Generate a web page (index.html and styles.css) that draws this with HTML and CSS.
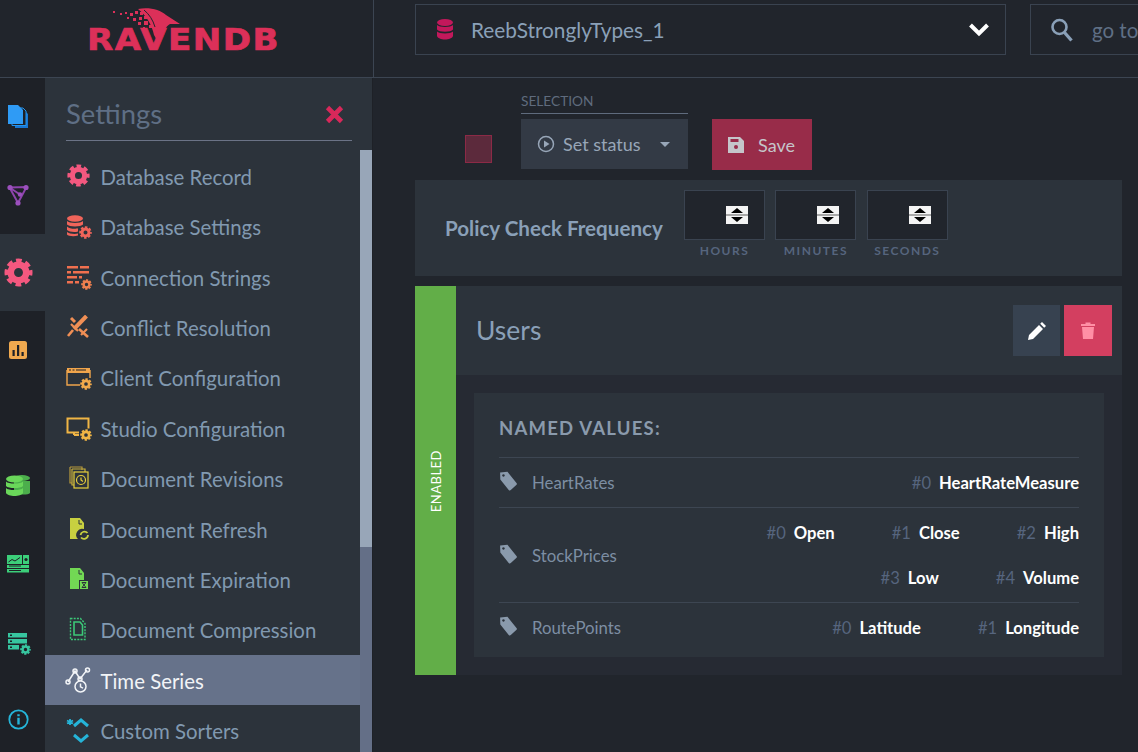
FILE: index.html
```html
<!DOCTYPE html>
<html lang="en">
<head>
<meta charset="utf-8">
<title>Time Series</title>
<link rel="stylesheet" href="styles.css">
</head>
<body>
<svg class="defs" aria-hidden="true">
  <symbol id="gear" viewBox="0 0 24 24">
    <circle cx="12" cy="12" r="6.400" fill="none" stroke="currentColor" stroke-width="5.400"/>
    <circle cx="12" cy="12" r="9.700" fill="none" stroke="currentColor" stroke-width="3.800" stroke-dasharray="4.600 3.020" stroke-dashoffset="2.300"/>
  </symbol>
  <symbol id="tag" viewBox="0 0 18 20">
    <path d="M1 1.500 8 .8l8.600 10.600a1.400 1.400 0 0 1-.2 2l-5.200 4.800a1.400 1.400 0 0 1-2-.2L1.200 8.200ZM4.200 3a1.200 1.200 0 1 0 .01 0Z" fill="currentColor" fill-rule="evenodd"/>
  </symbol>
</svg>

<header class="topbar">
  <div class="brand">
    <div class="logo">
      <span class="logo-text">RAVENDB</span>
      <svg class="logo-bird" viewBox="0 0 80 40" width="80" height="40">
        <path d="M30 4C42 2 52 5 58 10L72 19 62 19C58 21 55 27 50 37L46 30C44 20 38 10 30 4Z" fill="#dc3059"/>
        <path d="M36 5C41 9 45 15 47 22" stroke="#21252c" stroke-width="1" fill="none"/>
        <g fill="#dc3059">
          <rect x="5" y="6" width="2" height="2"/><rect x="12" y="8" width="2" height="2"/><rect x="17" y="7" width="2" height="2"/>
          <rect x="22" y="8" width="3" height="3"/><rect x="27" y="6" width="3" height="3"/><rect x="32" y="7" width="3" height="3"/>
          <rect x="19" y="12" width="2" height="2"/><rect x="25" y="13" width="3" height="3"/><rect x="31" y="12" width="3" height="3"/>
          <rect x="36" y="11" width="3" height="3"/><rect x="30" y="17" width="3" height="3"/><rect x="36" y="16" width="4" height="4"/>
          <rect x="41" y="20" width="3" height="3"/><rect x="35" y="22" width="2" height="2"/>
        </g>
      </svg>
    </div>
  </div>
  <div class="topbar-main">
    <div class="db-select">
      <svg class="db-icon" width="18" height="24" viewBox="0 0 18 24"><g fill="#c2185b"><ellipse cx="9" cy="4.500" rx="8" ry="3.500"/><path d="M1 7c2 2.600 14 2.600 16 0v4.500c-2 3-14 3-16 0Z"/><path d="M1 13.500c2 2.600 14 2.600 16 0V18c-1 4.600-15 4.600-16 0Z"/></g></svg>
      <span class="db-name">ReebStronglyTypes_1</span>
      <svg class="chevron" width="22" height="15" viewBox="0 0 22 15"><path d="M2.500 3 11 11.500 19.500 3" fill="none" stroke="#fff" stroke-width="4"/></svg>
    </div>
    <div class="search">
      <svg width="24" height="26" viewBox="0 0 24 26"><circle cx="9.500" cy="10" r="7" fill="none" stroke="#8aa0b8" stroke-width="2.600"/><path d="m14.500 15.500 7 8" stroke="#8aa0b8" stroke-width="3.400"/></svg>
      <span class="search-text">go to</span>
    </div>
  </div>
</header>

<div class="workspace">
  <nav class="rail">
    <div class="rail-item">
      <svg width="22" height="26" viewBox="0 0 22 26"><path d="M8 7h10l3 3v14H8Z" fill="#1976d2"/><path d="M5 4h11l3 3v14.500H5Z" fill="#1e2127" stroke="#2196f3" stroke-width="1"/><path d="M1 1h10l5 5v14H1Z" fill="#2f9bf5"/></svg>
    </div>
    <div class="rail-item">
      <svg width="22" height="22" viewBox="0 0 22 22"><g stroke="#8e44ad" stroke-width="2" fill="none"><path d="M2.500 3.500 19.500 3 11 19ZM2.500 3.500 13 10.500"/></g><g fill="#9b50bd"><circle cx="3" cy="3.500" r="2.600"/><circle cx="19" cy="3.500" r="2.600"/><circle cx="11" cy="19" r="2.600"/><circle cx="13" cy="10.500" r="2.200"/></g></svg>
    </div>
    <div class="rail-item rail-active">
      <svg class="c-pink" width="29" height="29"><use href="#gear"/></svg>
    </div>
    <div class="rail-item rail-gap">
      <svg width="18" height="18" viewBox="0 0 18 18"><rect width="18" height="18" rx="2.500" fill="#f0a94f"/><path d="M3.500 9h2.200v6H3.500ZM8 4h2.200v11H8ZM12.500 11h2.200v4h-2.200Z" fill="#1e2127"/></svg>
    </div>
    <div class="rail-item">
      <svg width="26" height="24" viewBox="0 0 26 24"><g fill="#4cae4c"><ellipse cx="17" cy="4" rx="8" ry="3"/><path d="M9 7h16v12c-2 2-10 2-16 0Z"/></g><g fill="#6ad75a"><ellipse cx="9.500" cy="5" rx="8.500" ry="3.500"/><path d="M1 7.500c2 2.800 15 2.800 17 0V12c-2 2.800-15 2.800-17 0Z"/><path d="M1 14c2 2.800 15 2.800 17 0v5c-2 4-15 4-17 0Z"/></g></svg>
    </div>
    <div class="rail-item">
      <svg width="22" height="18" viewBox="0 0 22 18"><path d="M0 0h15v9H0ZM16 0h6v9h-6ZM0 10h22v3H0ZM0 14h22v3.500H0Z" fill="#3ccf7a"/><path d="M1.500 7 5 4.500l3 1.500 5-3.500" stroke="#1e2127" stroke-width="1" fill="none"/><circle cx="19" cy="4.500" r="1.600" fill="#1e2127"/><path d="M2 11h12M2 15.500h12" stroke="#1e2127" stroke-width="1"/></svg>
    </div>
    <div class="rail-item rail-server">
      <svg width="20" height="20" viewBox="0 0 20 20"><path d="M0 0h19v4.500H0ZM0 6h19v4.500H0ZM0 12h11v4.500H0Z" fill="#37c6a0"/><g fill="#1e2127"><rect x="2" y="1.500" width="2" height="1.500"/><rect x="2" y="7.500" width="2" height="1.500"/><rect x="2" y="13.500" width="2" height="1.500"/></g></svg>
      <svg class="rail-sub c-teal" width="11" height="11"><use href="#gear"/></svg>
    </div>
    <div class="rail-item">
      <svg width="21" height="21" viewBox="0 0 21 21"><circle cx="10.500" cy="10.500" r="9.200" fill="none" stroke="#25b4d8" stroke-width="1.800"/><path d="M9.300 8.800h2.400v6.700H9.300ZM9.300 5.200h2.400v2.100H9.300Z" fill="#25b4d8"/></svg>
    </div>
  </nav>

  <aside class="panel">
    <div class="panel-head">
      <h2 class="panel-title">Settings</h2>
      <svg class="panel-close" width="19" height="19" viewBox="0 0 19 19"><path d="m2.500 2.500 14 14M16.500 2.500l-14 14" stroke="#d8285a" stroke-width="4.600"/></svg>
    </div>
    <div class="panel-body">
      <ul class="menu">
        <li class="menu-item"><span class="menu-icon"><svg class="c-pink" width="23" height="23"><use href="#gear"/></svg></span>Database Record</li>
        <li class="menu-item"><span class="menu-icon"><svg width="24" height="22" viewBox="0 0 24 22"><g fill="#f0645a"><ellipse cx="9" cy="3.500" rx="8" ry="3.200"/><path d="M1 6c2 2.600 14 2.600 16 0v3.600c-2 2.600-14 2.600-16 0ZM1 11.500c2 2.600 9 2.600 11 1.800v3.200c-3 1-9 .6-11-1.400ZM1 17c2 2 8 2.200 11 1.600v2c-4 1.400-10 .6-11-1Z"/></g></svg><svg class="icon-sub c-coral" width="13" height="13"><use href="#gear"/></svg></span>Database Settings</li>
        <li class="menu-item"><span class="menu-icon"><svg width="24" height="21" viewBox="0 0 24 21"><path d="M1 0h11v2.500H1ZM14 0h9v2.500h-9ZM1 5h4v2.500H1ZM7 5h16v2.500H7ZM1 10h10v2.500H1ZM13 10h3v2.500h-3ZM1 15h6v2.500H1ZM9 15h4v2.500H9Z" fill="#f0704f"/></svg><svg class="icon-sub c-orange1" width="11" height="11"><use href="#gear"/></svg></span>Connection Strings</li>
        <li class="menu-item"><span class="menu-icon"><svg width="25" height="23" viewBox="0 0 25 23"><g stroke="#f08f55" fill="none"><path d="M20.500 1 8 14" stroke-width="4"/><path d="M5 9l7 7" stroke-width="2.200"/><path d="M7 15l-5 6" stroke-width="2.600"/><path d="M5 3l4 4" stroke-width="3"/><path d="m13 14 9 8" stroke-width="2.600"/><path d="m15 20 6-6" stroke-width="2.200"/></g></svg></span>Conflict Resolution</li>
        <li class="menu-item"><span class="menu-icon"><svg width="25" height="20" viewBox="0 0 25 20"><path d="M1 1h23v5H1Z" fill="#f0a54c"/><path d="M1 3v15h13M24 3v8" fill="none" stroke="#f0a54c" stroke-width="1.400"/><path d="M3 3h2M6.500 3h2M10 3h10" stroke="#1e2127" stroke-width="1"/></svg><svg class="icon-sub c-orange2" width="12" height="12"><use href="#gear"/></svg></span>Client Configuration</li>
        <li class="menu-item"><span class="menu-icon"><svg width="25" height="22" viewBox="0 0 25 22"><path d="M13 15.500H1.500v-14h21v10" fill="none" stroke="#f0b545" stroke-width="2"/><path d="M8 15v3M8 18h5" stroke="#f0b545" stroke-width="2"/></svg><svg class="icon-sub c-amber" width="12" height="12"><use href="#gear"/></svg></span>Studio Configuration</li>
        <li class="menu-item"><span class="menu-icon"><svg width="24" height="24" viewBox="0 0 24 24"><g fill="none" stroke-width="1.200"><path d="M4 1h12v3M4 1v16h2" stroke="#b89a3c"/><path d="M6 3h13v3M6 3v16h2" stroke="#c8b03c"/><rect x="8" y="6" width="14" height="16" stroke="#e8d03c"/><circle cx="15" cy="14" r="4.500" stroke="#e8d03c"/><path d="M15 11.500V14l2 1.500" stroke="#e8d03c"/></g></svg></span>Document Revisions</li>
        <li class="menu-item"><span class="menu-icon"><svg width="24" height="24" viewBox="0 0 24 24"><path d="M4 1h10l4 5v6a6 6 0 0 0-6 10H4Z" fill="#c8d040"/><path d="M13 3v4h3" stroke="#2c333b" fill="none"/><path d="M14.500 18a4 4 0 0 1 7-2M22 18a4 4 0 0 1-7 2.500" fill="none" stroke="#c8d040" stroke-width="1.800"/></svg></span>Document Refresh</li>
        <li class="menu-item"><span class="menu-icon"><svg width="24" height="24" viewBox="0 0 24 24"><path d="M4 1h10l4 5v7h-5v9H4Z" fill="#72d854"/><path d="M13 3v4h3" stroke="#2c333b" fill="none"/><path d="M14 14h8v8h-8Z" fill="#72d854"/><path d="M16 15.500h4L16 20.500h4Z" fill="none" stroke="#2c333b"/></svg></span>Document Expiration</li>
        <li class="menu-item"><span class="menu-icon"><svg width="24" height="24" viewBox="0 0 24 24"><path d="M4.500 1.500h10l4.500 5v16h-14.500Z" fill="none" stroke="#3cc878" stroke-width="1.400" stroke-dasharray="2 1.200"/><path d="M8 5h6l2.500 3v10H8Z" fill="none" stroke="#3cc878" stroke-width="1.600"/></svg></span>Document Compression</li>
        <li class="menu-item menu-item-active"><span class="menu-icon"><svg width="26" height="26" viewBox="0 0 26 26"><g fill="none" stroke="#f2f4f7" stroke-width="1.500"><path d="m3 15 7-11 5 8 7-9"/><circle cx="3" cy="15" r="2"/><circle cx="10" cy="4" r="2"/><circle cx="22.500" cy="3" r="2"/><circle cx="15" cy="12" r="2"/><circle cx="15.500" cy="19.500" r="5.500" fill="#66728a"/><path d="M15.500 16.500v3.300l2.500 1.300"/></g></svg></span>Time Series</li>
        <li class="menu-item"><span class="menu-icon"><svg width="24" height="26" viewBox="0 0 24 26"><path d="m8 9 7-6 7 6M8 18l7 6 7-6" fill="none" stroke="#25b4d8" stroke-width="3"/><path d="M4 2v6M1 3.500l6 3M7 3.500l-6 3" stroke="#25b4d8" stroke-width="1.800"/></svg></span>Custom Sorters</li>
      </ul>
      <div class="scrollbar"><div class="scroll-thumb"></div></div>
    </div>
  </aside>

  <main class="content">
    <div class="toolbar">
      <div class="checkbox"></div>
      <div class="selection">
        <div class="selection-label">SELECTION</div>
        <div class="btn btn-status">
          <svg width="18" height="18" viewBox="0 0 18 18"><circle cx="9" cy="9" r="7.500" fill="none" stroke="#98a6b8" stroke-width="1.500"/><path d="m7 5.500 5.500 3.500L7 12.500Z" fill="#98a6b8"/></svg>
          <span>Set status</span>
          <span class="caret"></span>
        </div>
      </div>
      <div class="btn btn-save">
        <svg width="16" height="16" viewBox="0 0 16 16"><path d="M0 0h12l4 4v12H0Z" fill="#c5c5ca"/><rect x="2.500" y="2" width="8" height="3" fill="#982c49"/><circle cx="8" cy="10" r="2" fill="#982c49"/></svg>
        <span>Save</span>
      </div>
    </div>

    <section class="frequency">
      <h3 class="freq-title">Policy Check Frequency</h3>
      <div class="time-field">
        <div class="time-input"><span class="spinner"><span class="spin-up"></span><span class="spin-down"></span></span></div>
        <div class="time-label">HOURS</div>
      </div>
      <div class="time-field">
        <div class="time-input"><span class="spinner"><span class="spin-up"></span><span class="spin-down"></span></span></div>
        <div class="time-label">MINUTES</div>
      </div>
      <div class="time-field">
        <div class="time-input"><span class="spinner"><span class="spin-up"></span><span class="spin-down"></span></span></div>
        <div class="time-label">SECONDS</div>
      </div>
    </section>

    <section class="card">
      <div class="card-state"><span class="state-text">ENABLED</span></div>
      <div class="card-main">
        <div class="card-head">
          <h3 class="card-title">Users</h3>
          <div class="card-actions">
            <div class="icon-btn icon-btn-edit"><svg width="18" height="18" viewBox="0 0 18 18"><path d="M0 18l1-5L11 3l4 4L5 17ZM12.200 1.800 14 0l4 4-1.800 1.800Z" fill="#fff"/></svg></div>
            <div class="icon-btn icon-btn-delete"><svg width="14" height="17" viewBox="0 0 14 17"><path d="M0 2h4.500V.5h5V2H14v2H0ZM1 5h12l-1 12H2Z" fill="#ff8fa5"/></svg></div>
          </div>
        </div>
        <div class="card-body">
          <div class="values">
            <h4 class="values-title">NAMED VALUES:</h4>
            <div class="value-row">
              <div class="value-name"><svg class="tag" width="19" height="21"><use href="#tag"/></svg>HeartRates</div>
              <div class="value-list">
                <span class="value"><span class="idx">#0</span><b>HeartRateMeasure</b></span>
              </div>
            </div>
            <div class="value-row">
              <div class="value-name"><svg class="tag" width="19" height="21"><use href="#tag"/></svg>StockPrices</div>
              <div class="value-list">
                <span class="value"><span class="idx">#0</span><b>Open</b></span>
                <span class="value"><span class="idx">#1</span><b>Close</b></span>
                <span class="value"><span class="idx">#2</span><b>High</b></span>
                <span class="value"><span class="idx">#3</span><b>Low</b></span>
                <span class="value"><span class="idx">#4</span><b>Volume</b></span>
              </div>
            </div>
            <div class="value-row">
              <div class="value-name"><svg class="tag" width="19" height="21"><use href="#tag"/></svg>RoutePoints</div>
              <div class="value-list">
                <span class="value"><span class="idx">#0</span><b>Latitude</b></span>
                <span class="value"><span class="idx">#1</span><b>Longitude</b></span>
              </div>
            </div>
          </div>
        </div>
      </div>
    </section>
  </main>
</div>
</body>
</html>
```
FILE: styles.css
```css
* { box-sizing: border-box; }
html, body { margin: 0; height: 100%; }
body {
  width: 1138px;
  height: 752px;
  overflow: hidden;
  background: #21252c;
  color: #8199b0;
  font-family: Lato, "Open Sans", sans-serif;
  display: flex;
  flex-direction: column;
}
h2, h3, h4, ul { margin: 0; padding: 0; font-weight: normal; }
ul { list-style: none; }
svg { display: block; flex: none; }
.defs { position: absolute; width: 0; height: 0; }

.c-pink { color: #f4587f; }
.c-coral { color: #f0645a; }
.c-orange1 { color: #f0804f; }
.c-orange2 { color: #f0a94c; }
.c-amber { color: #f0b545; }
.c-teal { color: #37c6a0; }

/* top bar */
.topbar {
  height: 78px;
  flex: none;
  display: flex;
  border-bottom: 1px solid #3c4552;
}
.brand {
  width: 374px;
  flex: none;
  padding: 20px 0 0 87px;
  border-right: 1px solid #3c4552;
}
.logo { position: relative; width: 190px; }
.logo-text {
  display: block;
  font-family: "DejaVu Sans", sans-serif;
  font-weight: 700;
  font-size: 31px;
  line-height: 38px;
  letter-spacing: 1.300px;
  color: #dc3059;
  white-space: nowrap;
  -webkit-text-stroke: .7px #dc3059;
  transform: scaleX(1.1);
  transform-origin: left center;
}
.logo-bird { position: absolute; left: 21px; top: -15px; }
.topbar-main {
  flex: 1;
  display: flex;
  gap: 24px;
  padding: 4px 0 0 41px;
  min-width: 0;
}
.db-select {
  width: 591px;
  height: 51px;
  flex: none;
  display: flex;
  align-items: center;
  padding: 0 0 0 20px;
  border: 1px solid #3a4350;
}
.db-name { margin-left: 17px; font-size: 20.800px; color: #8aa0b8; }
.chevron { margin-left: auto; margin-right: 15px; }
.search {
  flex: 1;
  height: 51px;
  display: flex;
  align-items: center;
  gap: 18px;
  padding-left: 19px;
  border: 1px solid #3a4350;
  border-right: 0;
  overflow: hidden;
  white-space: nowrap;
}
.search-text { font-size: 20.500px; color: #5f6f85; }

/* layout */
.workspace { flex: 1; display: flex; min-height: 0; }
.rail { width: 45px; flex: none; display: flex; flex-direction: column; }
.rail-item {
  height: 77.800px;
  flex: none;
  display: flex;
  align-items: center;
  justify-content: center;
  padding-right: 9px;
  background: #1e2127;
  position: relative;
}
.rail-active { background: #2c333b; }
.rail-gap { height: 135.800px; padding-bottom: 58px; }
.rail-server { padding-top: 3px; }
.rail-sub { position: absolute; left: 20px; top: 41px; }

.panel {
  width: 328px;
  flex: none;
  display: flex;
  flex-direction: column;
  background: #2c333b;
  border-right: 1px solid #1e2127;
  min-height: 0;
}
.panel-head {
  flex: none;
  margin: 0 20px 0 21px;
  height: 63px;
  display: flex;
  align-items: center;
  justify-content: space-between;
  border-bottom: 1px solid #6b7386;
  padding: 9px 8px 0 0;
}
.panel-title { font-size: 27.400px; color: #5f6f85; }
.panel-close { margin-top: 2px; }
.panel-body { flex: 1; display: flex; min-height: 0; padding-top: 9px; }
.menu { flex: 1; overflow: hidden; padding-top: .6px; }
.menu-item {
  height: 50.400px;
  display: flex;
  align-items: center;
  padding: 2px 0 0 21px;
  font-size: 20.400px;
  white-space: nowrap;
}
.menu-item-active { background: #66728a; color: #f2f4f7; }
.menu-icon {
  width: 24px;
  height: 26px;
  margin: -2px 10.500px 0 0;
  flex: none;
  display: flex;
  align-items: center;
  justify-content: center;
  position: relative;
}
.icon-sub { position: absolute; right: -2px; bottom: 0; }
.scrollbar { width: 12px; flex: none; background: #646f87; }
.scroll-thumb { height: 397px; background: #98a6b8; }

/* content */
.content { flex: 1; min-width: 0; padding: 0 16px 0 42px; }
.toolbar {
  height: 102px;
  display: flex;
  align-items: flex-start;
}
.checkbox {
  width: 27px;
  height: 28px;
  margin: 57px 0 0 50px;
  background: #5c2a3c;
  border: 1px solid #8b2a46;
}
.selection { width: 167px; margin-left: 29px; padding-top: 15px; }
.selection-label {
  height: 21px;
  font-size: 13.700px;
  line-height: 16px;
  color: #5f6b7d;
  border-bottom: 1px solid #5f6b7d;
  margin-bottom: 5px;
}
.btn {
  height: 50px;
  display: flex;
  align-items: center;
  font-size: 18px;
}
.btn-status {
  padding-left: 16px;
  gap: 8px;
  background: #333a45;
  color: #98a6b8;
}
.caret {
  margin-left: 11px;
  border: 5px solid transparent;
  border-top-color: #98a6b8;
  border-bottom: 0;
}
.btn-save {
  width: 100px;
  height: 51px;
  margin: 41px 0 0 24px;
  padding-left: 16px;
  gap: 14px;
  background: #982c49;
  color: #c5c5ca;
}

.frequency {
  height: 96px;
  display: flex;
  padding: 10px 0 0 30px;
  background: #2c333b;
}
.freq-title {
  width: 239px;
  font-size: 20.600px;
  font-weight: 700;
  line-height: 24px;
  padding-top: 26px;
  color: #8aa0b8;
  white-space: nowrap;
}
.time-field { width: 81px; margin-right: 10.400px; }
.time-input {
  height: 50px;
  display: flex;
  align-items: center;
  justify-content: flex-end;
  padding-right: 16px;
  background: #21252c;
  border: 1px solid #3a4350;
}
.spinner {
  width: 22px;
  height: 18px;
  display: flex;
  flex-direction: column;
  justify-content: space-between;
  align-items: center;
  padding: 2px 0;
  background: linear-gradient(#f4f4f4 44%, #a8a8a8 44%, #a8a8a8 56%, #f4f4f4 56%);
}
.spin-up, .spin-down {
  width: 0;
  height: 0;
  border-left: 6px solid transparent;
  border-right: 6px solid transparent;
}
.spin-up { border-bottom: 5px solid #000; }
.spin-down { border-top: 5px solid #000; }
.time-label {
  margin-top: 3px;
  font-size: 12px;
  font-weight: 700;
  letter-spacing: 1.500px;
  text-align: center;
  color: #56657e;
}

.card {
  height: 389px;
  margin-top: 10px;
  display: flex;
  background: #262a33;
}
.card-state {
  width: 41px;
  flex: none;
  padding-top: 2px;
  background: #62ae48;
  display: flex;
  align-items: center;
  justify-content: center;
}
.state-text {
  writing-mode: vertical-rl;
  transform: rotate(180deg);
  font-size: 13px;
  letter-spacing: .5px;
  color: #fff;
}
.card-main { flex: 1; min-width: 0; }
.card-head {
  height: 89px;
  display: flex;
  align-items: center;
  justify-content: space-between;
  padding: 0 10px 0 20px;
  background: #2c333b;
}
.card-title { font-size: 26.500px; color: #8aa0b8; margin-top: -2px; }
.card-actions { display: flex; gap: 4px; }
.icon-btn {
  width: 47px;
  height: 51px;
  display: flex;
  align-items: center;
  justify-content: center;
}
.icon-btn-edit { background: #374250; }
.icon-btn-delete { width: 48px; background: #d33f60; }
.card-body { padding: 18px 18px 0; }
.values { background: #2c333b; padding: 23px 25px 0; height: 264px; }
.values-title {
  height: 41px;
  font-size: 18.500px;
  font-weight: 700;
  line-height: 24px;
  letter-spacing: 1.200px;
  color: #8a9aac;
}
.value-row {
  display: flex;
  align-items: center;
  justify-content: space-between;
  border-top: 1px solid #3d4652;
  font-size: 16.800px;
}
.value-name { display: flex; align-items: center; gap: 14px; color: #7d8ea3; }
.tag { color: #8a9aac; margin-top: -2px; }
.value-list {
  width: 350px;
  display: flex;
  flex-wrap: wrap;
  justify-content: flex-end;
  column-gap: 57px;
  padding: 2.500px 0 1.500px;
  font-size: 16.600px;
}
.value { height: 45px; display: flex; align-items: center; white-space: nowrap; }
.idx { color: #56657e; margin-right: 8px; }
.value b { color: #fff; font-weight: 700; }
```
